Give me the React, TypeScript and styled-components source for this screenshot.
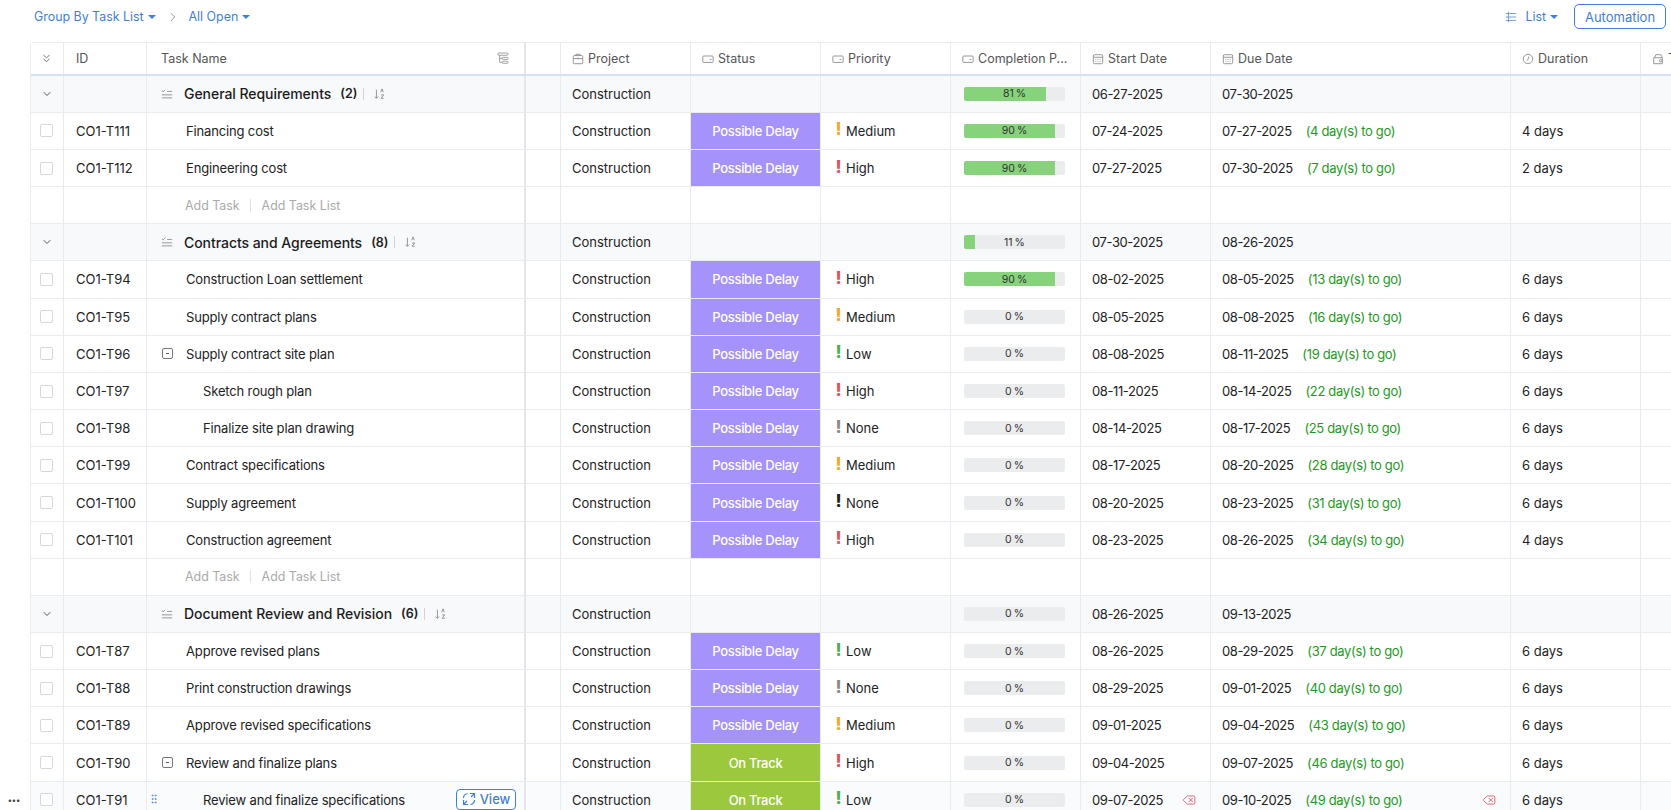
import React from 'react';
import styled, { createGlobalStyle } from 'styled-components';
import { ChevronDown, ChevronRight, ChevronsDown, Delete, GripVertical } from 'lucide-react';

const GlobalStyle = createGlobalStyle`
  html, body {
    margin: 0;
    padding: 0;
    height: 100%;
    overflow: hidden;
    background: #fff;
    font-family: Inter, "Liberation Sans", sans-serif;
    font-size: 13px;
    color: #222;
  }
`;

const Page = styled.div`
  width: 1671px;
  height: 810px;
  overflow: hidden;
  position: relative;
`;

const Toolbar = styled.div`
  height: 42px;
  padding: 0 5px 9px 34px;
  box-sizing: border-box;
  display: flex;
  align-items: center;
  color: #3f7fdc;
`;

const ToolText = styled.span<{ $gap?: number }>`
  font-size: 12.4px;
  margin-left: ${(p) => p.$gap ?? 0}px;
`;

const Caret = styled.span`
  display: inline-block;
  margin: 1px 0 0 4px;
  border-left: 4px solid transparent;
  border-right: 4px solid transparent;
  border-top: 4px solid #3f7fdc;
`;

const Crumb = styled.span`
  display: inline-flex;
  margin: 0 9px 0 10px;
  color: #888;
`;

const Spacer = styled.div`
  flex: 1;
`;

const AutomationButton = styled.button`
  height: 25px;
  width: 92px;
  margin-left: 16px;
  padding: 0;
  background: #fff;
  border: 1px solid #3f7fdc;
  border-radius: 5px;
  color: #3f7fdc;
  font: inherit;
  font-size: 13px;
`;

const Table = styled.div`
  margin-left: 30px;
  border-top: 1px solid #e8ecf0;
  border-left: 1px solid #e8ecf0;
  border-top-left-radius: 4px;
`;

const columns = '33px 83px 379px 35px 130px 130px 130px 130px 130px 300px 130px 130px';

const Row = styled.div<{ $kind: 'head' | 'group' | 'task' | 'add' | 'hover' }>`
  display: grid;
  grid-template-columns: ${columns};
  height: ${(p) => (p.$kind === 'head' ? '33px' : p.$kind === 'group' ? '36.9px' : '37.2px')};
  box-sizing: border-box;
  border-bottom: ${(p) => (p.$kind === 'head' ? '2px solid #d5e1ec' : '1px solid #e8ecf0')};
  background: ${(p) => (p.$kind === 'group' ? '#f7f9fb' : p.$kind === 'hover' ? '#f9fbfd' : '#fff')};
`;

const Cell = styled.div<{ $thick?: boolean; $pad?: number }>`
  display: flex;
  align-items: center;
  min-width: 0;
  box-sizing: border-box;
  padding-left: ${(p) => p.$pad ?? 11}px;
  border-right: ${(p) => (p.$thick ? '2px solid #e3e7eb' : '1px solid #e8ecf0')};
  white-space: nowrap;
  position: relative;
`;

const HeadCell = styled(Cell)`
  color: #555;
  font-size: 12.5px;
  gap: 4px;
`;

const FieldIconBox = styled.svg`
  width: 12px;
  height: 12px;
  flex: none;
  color: #888;
`;

const DateText = styled.span`
  letter-spacing: -0.4px;
`;

const BoxCheck = styled.span`
  width: 11px;
  height: 11px;
  margin-left: 9px;
  border: 1px solid #d5d8dc;
  border-radius: 2px;
  background: #fff;
`;

const GroupName = styled.span`
  margin-left: 11px;
  font-size: 14px;
  font-weight: 500;
  letter-spacing: -0.05px;
  color: #1c1c1c;
`;

const GroupCount = styled.span`
  margin-left: 9px;
  font-size: 12.5px;
  font-weight: 600;
`;

const Divider = styled.span`
  width: 1px;
  height: 12px;
  margin: 0 9px 0 6px;
  background: #d0d3d7;
`;

const TaskName = styled.span<{ $indent: number }>`
  margin-left: ${(p) => p.$indent}px;
  letter-spacing: -0.15px;
`;

const Collapse = styled.span`
  width: 9px;
  height: 9px;
  margin: 0 -26px 0 15px;
  border: 1px solid #777;
  border-radius: 2px;
  display: flex;
  align-items: center;
  justify-content: center;
  &::after {
    content: '';
    width: 3px;
    height: 1px;
    background: #555;
  }
`;

const AddLink = styled.span`
  color: #aaa;
  font-size: 12.4px;
`;

const AddDivider = styled.span`
  width: 1px;
  height: 13px;
  margin: 0 11px 0 10px;
  background: #dfe1e4;
`;

const StatusCell = styled.div<{ $color: string }>`
  background: ${(p) => p.$color};
  color: #fff;
  display: flex;
  align-items: center;
  justify-content: center;
  font-weight: 500;
  letter-spacing: -0.3px;
  border-right: 1px solid #e8ecf0;
`;

const Bang = styled.span<{ $color: string }>`
  width: 9px;
  color: ${(p) => p.$color};
  font-size: 17px;
  font-weight: 800;
  line-height: 16px;
  margin: -3px 3px 0 0;
  text-align: center;
`;

const Track = styled.div`
  width: 101px;
  height: 14px;
  border-radius: 2px;
  background: #ebecee;
  position: relative;
  overflow: hidden;
`;

const Fill = styled.div`
  height: 100%;
  background: #86d37c;
`;

const Percent = styled.span`
  position: absolute;
  inset: 0;
  display: flex;
  align-items: center;
  justify-content: center;
  font-size: 10.5px;
  word-spacing: -1px;
  color: #333;
`;

const ToGo = styled.span`
  margin-left: 14px;
  color: #1d9a1d;
  letter-spacing: -0.35px;
`;

const ViewButton = styled.span`
  position: absolute;
  right: 8px;
  top: 7px;
  height: 21px;
  width: 60px;
  box-sizing: border-box;
  border: 1px solid #3f7fdc;
  border-radius: 4px;
  background: #fff;
  color: #3f7fdc;
  display: flex;
  align-items: center;
  justify-content: center;
  gap: 4px;
  font-weight: 500;
`;

const DeleteMark = styled.span`
  position: absolute;
  right: 14px;
  top: 11px;
  display: flex;
  color: #e2545e;
`;

const MoreDots = styled.span`
  position: absolute;
  left: 8px;
  top: 796px;
  font-size: 8px;
  font-weight: 700;
  line-height: 8px;
  letter-spacing: 0.3px;
  color: #444;
`;

const DragHandle = styled.span`
  position: absolute;
  left: 1px;
  top: 11px;
  display: flex;
  color: #5b8fdc;
`;

const HeadEndIcon = styled.span`
  position: absolute;
  right: 15px;
  top: 9px;
  display: flex;
`;

const ListIcon = () => (
  <FieldIconBox viewBox="0 0 14 14" fill="none" stroke="#5b8fdc" strokeWidth="1">
    <path d="M1 3h12M1 7h12M1 11h12M4 1v12" />
  </FieldIconBox>
);

const TaskListIcon = () => (
  <FieldIconBox viewBox="0 0 14 14" fill="none" stroke="currentColor" strokeWidth="1">
    <path d="M1 3l1.500 1.500L5 2M7 4h6M1 8h12M1 11.500h12" />
  </FieldIconBox>
);

const SortIcon = () => (
  <FieldIconBox viewBox="0 0 14 14" fill="none" stroke="currentColor" strokeWidth="1">
    <path d="M4 2v10M2 10l2 2 2-2M9 5l1.500-4L12 5M9.500 8h3l-3 4h3" />
  </FieldIconBox>
);

const TreeIcon = () => (
  <FieldIconBox viewBox="0 0 14 14" fill="none" stroke="currentColor" strokeWidth="0.9">
    <rect x="1" y="1.200" width="12" height="2.600" rx="1.200" />
    <path d="M3 3.800v8.200h3M3 7.500h3" />
    <rect x="6" y="6.300" width="7" height="2.400" rx="1.200" />
    <rect x="6" y="10.800" width="7" height="2.400" rx="1.200" />
  </FieldIconBox>
);

const ProjectIcon = () => (
  <FieldIconBox viewBox="0 0 14 14" fill="none" stroke="currentColor" strokeWidth="1">
    <rect x="1.500" y="3" width="11" height="9.500" rx="1" />
    <path d="M4.500 3V1.500h5V3M1.500 6.500h11M7 5.500v2" />
  </FieldIconBox>
);

const FieldIcon = () => (
  <FieldIconBox viewBox="0 0 14 14" fill="none" stroke="currentColor" strokeWidth="1">
    <rect x="1" y="3.500" width="12" height="7.500" rx="1" />
    <path d="M9 7.500h2" />
  </FieldIconBox>
);

const CalendarIcon = () => (
  <FieldIconBox viewBox="0 0 14 14" fill="none" stroke="currentColor" strokeWidth="1">
    <rect x="1.500" y="2" width="11" height="10.500" rx="1.500" />
    <path d="M1.500 5h11M4 7.500h1M6.500 7.500h1M9 7.500h1M4 10h1M6.500 10h1M9 10h1" />
  </FieldIconBox>
);

const ClockIcon = () => (
  <FieldIconBox viewBox="0 0 14 14" fill="none" stroke="currentColor" strokeWidth="1">
    <circle cx="7" cy="7" r="5.500" />
    <path d="M8 4L7 7.500 5.500 9" />
  </FieldIconBox>
);

const WalletIcon = () => (
  <FieldIconBox viewBox="0 0 14 14" fill="none" stroke="currentColor" strokeWidth="1">
    <path d="M2 5.500h10v7H2zM3 5.500l1.500-3.500h6L12 5.500" />
    <circle cx="10" cy="9" r="1.500" />
  </FieldIconBox>
);

const ExpandIcon = () => (
  <svg width="14" height="14" viewBox="0 0 14 14" fill="none" stroke="currentColor" strokeWidth="1.200">
    <path d="M8 1.500h4.500V6M12.500 1.500L9 5M1.500 8v4.500H6M1.500 12.500L5 9M1.500 6C1.500 3.500 3 2 5.500 1.500M12.500 8c0 2.500-1.500 4-4 4.500" />
  </svg>
);

type Priority = 'Medium' | 'High' | 'Low' | 'None' | 'NoneDark';

const bangColor: Record<Priority, string> = {
  Medium: '#f5a623',
  High: '#e2525c',
  Low: '#4caf50',
  None: '#8a8a8a',
  NoneDark: '#222',
};

type TaskData = {
  id: string;
  name: string;
  priority: Priority;
  done: number;
  start: string;
  due: string;
  togo: number;
  duration: string;
  indent?: boolean;
  parent?: boolean;
  onTrack?: boolean;
  hover?: boolean;
};

type Item =
  | { type: 'group'; name: string; count: number; done: number; start: string; due: string }
  | { type: 'add' }
  | ({ type: 'task' } & TaskData);

const task = (
  id: string,
  name: string,
  priority: Priority,
  done: number,
  start: string,
  due: string,
  togo: number,
  duration: number,
  extra: Partial<TaskData> = {},
): Item => ({ type: 'task', id, name, priority, done, start, due, togo, duration: `${duration} days`, ...extra });

const items: Item[] = [
  { type: 'group', name: 'General Requirements', count: 2, done: 81, start: '06-27-2025', due: '07-30-2025' },
  task('CO1-T111', 'Financing cost', 'Medium', 90, '07-24-2025', '07-27-2025', 4, 4),
  task('CO1-T112', 'Engineering cost', 'High', 90, '07-27-2025', '07-30-2025', 7, 2),
  { type: 'add' },
  { type: 'group', name: 'Contracts and Agreements', count: 8, done: 11, start: '07-30-2025', due: '08-26-2025' },
  task('CO1-T94', 'Construction Loan settlement', 'High', 90, '08-02-2025', '08-05-2025', 13, 6),
  task('CO1-T95', 'Supply contract plans', 'Medium', 0, '08-05-2025', '08-08-2025', 16, 6),
  task('CO1-T96', 'Supply contract site plan', 'Low', 0, '08-08-2025', '08-11-2025', 19, 6, { parent: true }),
  task('CO1-T97', 'Sketch rough plan', 'High', 0, '08-11-2025', '08-14-2025', 22, 6, { indent: true }),
  task('CO1-T98', 'Finalize site plan drawing', 'None', 0, '08-14-2025', '08-17-2025', 25, 6, { indent: true }),
  task('CO1-T99', 'Contract specifications', 'Medium', 0, '08-17-2025', '08-20-2025', 28, 6),
  task('CO1-T100', 'Supply agreement', 'NoneDark', 0, '08-20-2025', '08-23-2025', 31, 6),
  task('CO1-T101', 'Construction agreement', 'High', 0, '08-23-2025', '08-26-2025', 34, 4),
  { type: 'add' },
  { type: 'group', name: 'Document Review and Revision', count: 6, done: 0, start: '08-26-2025', due: '09-13-2025' },
  task('CO1-T87', 'Approve revised plans', 'Low', 0, '08-26-2025', '08-29-2025', 37, 6),
  task('CO1-T88', 'Print construction drawings', 'None', 0, '08-29-2025', '09-01-2025', 40, 6),
  task('CO1-T89', 'Approve revised specifications', 'Medium', 0, '09-01-2025', '09-04-2025', 43, 6),
  task('CO1-T90', 'Review and finalize plans', 'High', 0, '09-04-2025', '09-07-2025', 46, 6, { parent: true, onTrack: true }),
  task('CO1-T91', 'Review and finalize specifications', 'Low', 0, '09-07-2025', '09-10-2025', 49, 6, { indent: true, onTrack: true, hover: true }),
];

const Progress: React.FC<{ done: number }> = ({ done }) => (
  <Track>
    <Fill style={{ width: `${done}%` }} />
    <Percent>{done} %</Percent>
  </Track>
);

const Header = () => (
  <Row $kind="head">
    <HeadCell $pad={9}>
      <ChevronsDown size={13} strokeWidth={1.5} />
    </HeadCell>
    <HeadCell $pad={12}>ID</HeadCell>
    <HeadCell $thick $pad={14}>
      Task Name
      <HeadEndIcon>
        <TreeIcon />
      </HeadEndIcon>
    </HeadCell>
    <HeadCell />
    <HeadCell><ProjectIcon />Project</HeadCell>
    <HeadCell><FieldIcon />Status</HeadCell>
    <HeadCell><FieldIcon />Priority</HeadCell>
    <HeadCell><FieldIcon />Completion P...</HeadCell>
    <HeadCell><CalendarIcon />Start Date</HeadCell>
    <HeadCell><CalendarIcon />Due Date</HeadCell>
    <HeadCell><ClockIcon />Duration</HeadCell>
    <HeadCell><WalletIcon />T</HeadCell>
  </Row>
);

const GroupRow: React.FC<{ item: Extract<Item, { type: 'group' }> }> = ({ item }) => (
  <Row $kind="group">
    <Cell $pad={10}><ChevronDown size={12} color="#555" /></Cell>
    <Cell />
    <Cell $thick $pad={14}>
      <TaskListIcon />
      <GroupName>{item.name}</GroupName>
      <GroupCount>({item.count})</GroupCount>
      <Divider />
      <SortIcon />
    </Cell>
    <Cell />
    <Cell>Construction</Cell>
    <Cell />
    <Cell />
    <Cell $pad={13}><Progress done={item.done} /></Cell>
    <Cell><DateText>{item.start}</DateText></Cell>
    <Cell><DateText>{item.due}</DateText></Cell>
    <Cell />
    <Cell />
  </Row>
);

const AddRow = () => (
  <Row $kind="add">
    <Cell />
    <Cell />
    <Cell $thick $pad={38}>
      <AddLink>Add Task</AddLink>
      <AddDivider />
      <AddLink>Add Task List</AddLink>
    </Cell>
    <Cell />
    <Cell />
    <Cell />
    <Cell />
    <Cell />
    <Cell />
    <Cell />
    <Cell />
    <Cell />
  </Row>
);

const TaskRow: React.FC<{ item: TaskData }> = ({ item }) => (
  <Row $kind={item.hover ? 'hover' : 'task'}>
    <Cell $pad={0}><BoxCheck /></Cell>
    <Cell $pad={12}>{item.id}</Cell>
    <Cell $thick $pad={0}>
      {item.hover && (
        <DragHandle>
          <GripVertical size={12} />
        </DragHandle>
      )}
      {item.parent && <Collapse />}
      <TaskName $indent={item.indent ? 56 : 39}>{item.name}</TaskName>
      {item.hover && (
        <ViewButton>
          <ExpandIcon />
          View
        </ViewButton>
      )}
    </Cell>
    <Cell />
    <Cell>Construction</Cell>
    <StatusCell $color={item.onTrack ? '#9bc83c' : '#a593fb'}>
      {item.onTrack ? 'On Track' : 'Possible Delay'}
    </StatusCell>
    <Cell $pad={13}>
      <Bang $color={bangColor[item.priority]}>!</Bang>
      {item.priority === 'NoneDark' ? 'None' : item.priority}
    </Cell>
    <Cell $pad={13}><Progress done={item.done} /></Cell>
    <Cell>
      <DateText>{item.start}</DateText>
      {item.hover && (
        <DeleteMark>
          <Delete size={14} strokeWidth={1.5} />
        </DeleteMark>
      )}
    </Cell>
    <Cell>
      <DateText>{item.due}</DateText>
      <ToGo>({item.togo} day(s) to go)</ToGo>
      {item.hover && (
        <DeleteMark>
          <Delete size={14} strokeWidth={1.5} />
        </DeleteMark>
      )}
    </Cell>
    <Cell>{item.duration}</Cell>
    <Cell />
  </Row>
);

export default function App() {
  return (
    <Page>
      <GlobalStyle />
      <Toolbar>
        <ToolText>Group By Task List</ToolText>
        <Caret />
        <Crumb><ChevronRight size={14} strokeWidth={1.5} /></Crumb>
        <ToolText>All Open</ToolText>
        <Caret />
        <Spacer />
        <ListIcon />
        <ToolText $gap={8}>List</ToolText>
        <Caret />
        <AutomationButton>Automation</AutomationButton>
      </Toolbar>
      <Table>
        <Header />
        {items.map((item, i) =>
          item.type === 'group' ? (
            <GroupRow key={i} item={item} />
          ) : item.type === 'add' ? (
            <AddRow key={i} />
          ) : (
            <TaskRow key={i} item={item} />
          ),
        )}
      </Table>
      <MoreDots>•••</MoreDots>
    </Page>
  );
}
